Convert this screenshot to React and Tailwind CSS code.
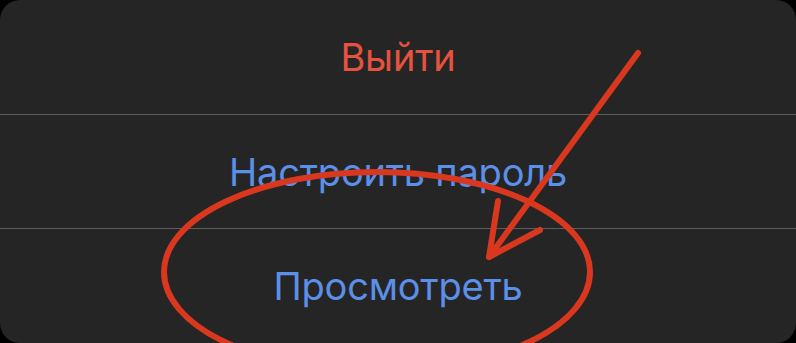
import React from 'react';

const actions = [
  { label: 'Выйти', tone: 'text-[#e5523f]' },
  { label: 'Настроить пароль', tone: 'text-[#5b8fe8]' },
  { label: 'Просмотреть', tone: 'text-[#5b8fe8]' },
];

// hand-drawn markup laid over the sheet
const Markup = () => (
  <svg
    className="absolute inset-0 pointer-events-none"
    width="796"
    height="343"
    viewBox="0 0 796 343"
    fill="none"
  >
    <g stroke="#d9381f" strokeWidth="6" strokeLinecap="round" strokeLinejoin="round">
      <ellipse cx="377" cy="272" rx="213" ry="100" />
      <path d="M638 53 L489 257" />
      <path d="M498 201 L489 257 L540 230" />
    </g>
  </svg>
);

export default function App() {
  return (
    <div className="w-[796px] h-[343px] bg-black overflow-hidden">
      <div className="relative h-full rounded-[20px] bg-[#252525] flex flex-col font-['Inter','Noto_Sans',sans-serif]">
        {actions.map((a, i) => (
          <div
            key={a.label}
            className={`flex-1 flex items-center justify-center ${i > 0 ? 'border-t border-[#5e5e5e]' : ''}`}
          >
            <span className={`text-[38px] leading-none tracking-[-0.2px] ${a.tone}`}>{a.label}</span>
          </div>
        ))}
        <Markup />
      </div>
    </div>
  );
}
